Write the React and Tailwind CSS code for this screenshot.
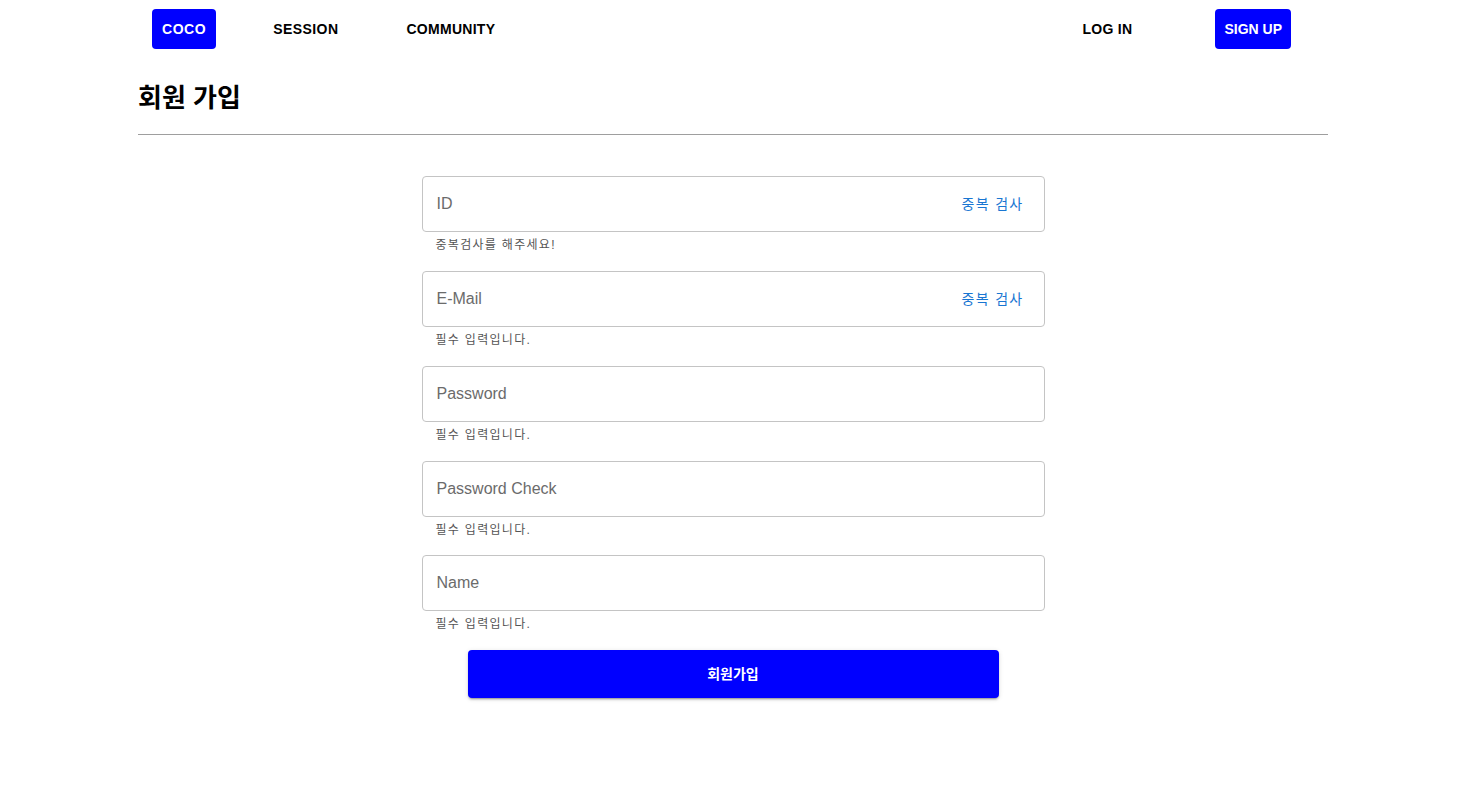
import React from "react";

const font = { fontFamily: '"Liberation Sans", Arial, "Noto Sans CJK KR", sans-serif' };

function Field({ placeholder, helper, check, type = "text", mb = "mb-[16px]" }) {
  return (
    <div className="flex flex-col">
      <div className="h-[56px] w-[623px] rounded-[4px] border border-[#c4c4c4] flex items-center pl-[14px] pr-[20px]">
        <input
          type={type}
          placeholder={placeholder}
          className="flex-1 bg-transparent outline-none text-[16px] text-[#222] placeholder:text-[#6b6b6b]"
        />
        {check && (
          <span className="text-[14px] text-[#1976d2] tracking-[1.3px] whitespace-nowrap">중복 검사</span>
        )}
      </div>
      <div className={`mt-[3px] ${mb} ml-[14px] h-[20px] leading-[20px] text-[12px] text-[#555] tracking-[1.3px]`}>
        {helper}
      </div>
    </div>
  );
}

export default function App() {
  return (
    <div className="min-h-[806px] bg-white text-black" style={font}>
      <div className="w-[1190px] ml-[138px]">
        <nav className="h-[57px] flex items-start pt-[9px] pl-[14px] pr-[37px]">
          <div className="flex items-center">
            <button className="h-[40px] px-[10px] rounded-[4px] bg-[#0000ff] text-white text-[14px] font-bold tracking-[0.04em]">
              COCO
            </button>
            <button className="ml-[47px] h-[40px] px-[10px] text-[14px] font-bold tracking-[0.03em]">SESSION</button>
            <button className="ml-[48px] h-[40px] px-[10px] text-[14px] font-bold tracking-[0.02em]">COMMUNITY</button>
          </div>
          <div className="ml-auto flex items-center">
            <button className="mr-[1px] h-[40px] px-[10px] text-[14px] font-bold tracking-[0.02em]">LOG IN</button>
            <button className="ml-[72px] h-[40px] px-[9px] rounded-[4px] bg-[#0000ff] text-white text-[14px] font-bold tracking-[0em]">
              SIGN UP
            </button>
          </div>
        </nav>
        <h1 className="mt-[25px] text-[26px] font-bold leading-[32px]">회원 가입</h1>
        <div className="mt-[20px] h-px bg-[#9e9e9e]" />
        <div className="mt-[41px] flex flex-col items-center pb-[100px]">
          <Field placeholder="ID" helper="중복검사를 해주세요!" check />
          <Field placeholder="E-Mail" helper="필수 입력입니다." check />
          <Field placeholder="Password" helper="필수 입력입니다." type="password" />
          <Field placeholder="Password Check" helper="필수 입력입니다." type="password" mb="mb-[15px]" />
          <Field placeholder="Name" helper="필수 입력입니다." />
          <button className="w-[531px] h-[48px] rounded-[4px] bg-[#0000ff] text-white text-[14px] font-bold shadow-[0_3px_1px_-2px_rgba(0,0,0,0.2),0_2px_2px_0_rgba(0,0,0,0.14),0_1px_5px_0_rgba(0,0,0,0.12)]">
            회원가입
          </button>
        </div>
      </div>
    </div>
  );
}
